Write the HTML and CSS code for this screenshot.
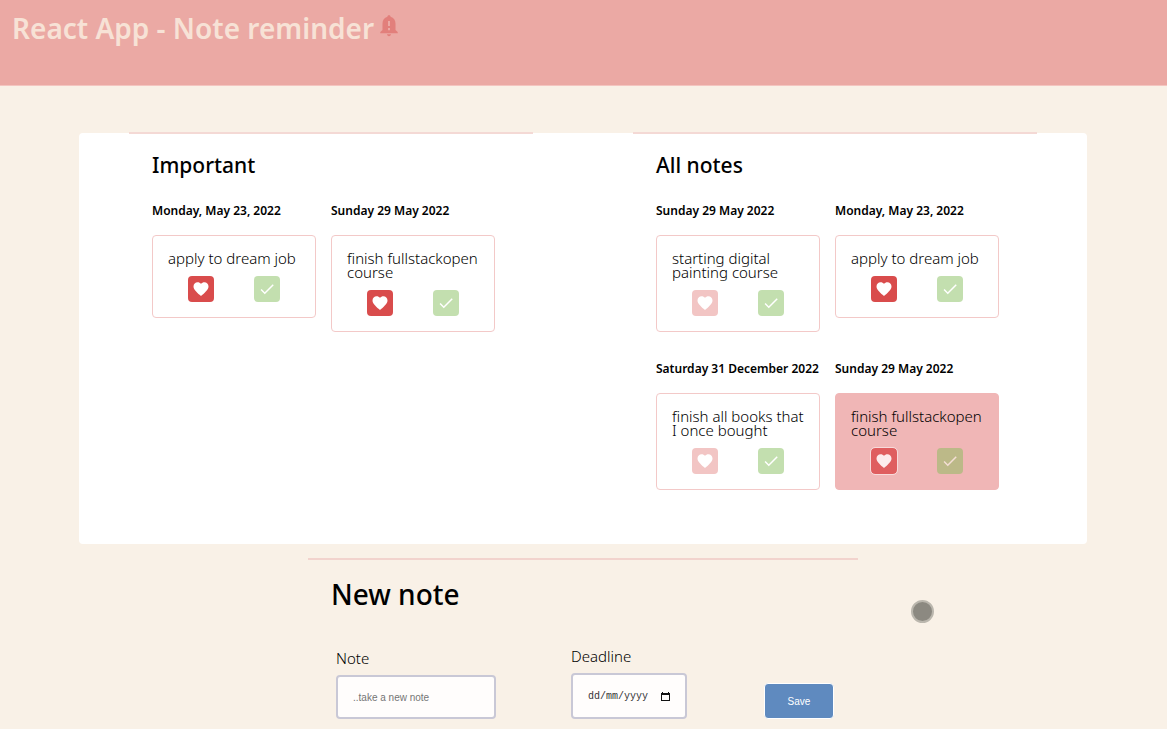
FILE: index.html
```html
<!DOCTYPE html>
<html lang="en">
<head>
<meta charset="utf-8">
<title>Note reminder</title>
<link rel="stylesheet" href="styles.css">
</head>
<body>
<svg class="sprite" aria-hidden="true">
  <symbol id="heart" viewBox="0 0 24 24"><path fill="currentColor" d="M12 21.35l-1.45-1.32C5.4 15.36 2 12.28 2 8.5 2 5.42 4.42 3 7.5 3c1.74 0 3.41.81 4.5 2.09C13.09 3.81 14.76 3 16.5 3 19.58 3 22 5.42 22 8.5c0 3.78-3.4 6.86-8.55 11.54L12 21.35z"/></symbol>
  <symbol id="check" viewBox="0 0 24 24"><path fill="currentColor" d="M9 16.17L4.83 12l-1.42 1.41L9 19 21 7l-1.41-1.41z"/></symbol>
</svg>
<header class="header">
  <h1 class="brand">React App - Note reminder</h1>
  <svg class="bell" viewBox="0 0 18 22" aria-hidden="true"><path fill="currentColor" fill-rule="evenodd" d="M9 0.2c-1 0-1.6.7-1.6 1.6C4.200 2.600 2.500 5.200 2.500 8.500V15L0.300 17v1.200h17.400V17L15.500 15V8.500c0-3.300-1.700-5.900-4.900-6.700C10.600.9 10 .2 9 .2zM8 6h2v5H8zM8 13h2v2.200H8zM7 19.300h4c0 1.100-.9 1.900-2 1.900s-2-.8-2-1.900z"/></svg>
</header>
<main class="main">
  <div class="panel">
    <section class="column">
      <h2 class="heading">Important</h2>
      <div class="notes">
        <article>
          <h3 class="date">Monday, May 23, 2022</h3>
          <div class="card"><p class="text">apply to dream job</p>
            <div class="actions"><button class="icon-button love" aria-label="Important"><svg><use href="#heart"/></svg></button><button class="icon-button done" aria-label="Done"><svg><use href="#check"/></svg></button></div></div>
        </article>
        <article>
          <h3 class="date">Sunday 29 May 2022</h3>
          <div class="card"><p class="text">finish fullstackopen course</p>
            <div class="actions"><button class="icon-button love" aria-label="Important"><svg><use href="#heart"/></svg></button><button class="icon-button done" aria-label="Done"><svg><use href="#check"/></svg></button></div></div>
        </article>
      </div>
    </section>
    <section class="column">
      <h2 class="heading">All notes</h2>
      <div class="notes">
        <article>
          <h3 class="date">Sunday 29 May 2022</h3>
          <div class="card"><p class="text">starting digital painting course</p>
            <div class="actions"><button class="icon-button love pale" aria-label="Important"><svg><use href="#heart"/></svg></button><button class="icon-button done" aria-label="Done"><svg><use href="#check"/></svg></button></div></div>
        </article>
        <article>
          <h3 class="date">Monday, May 23, 2022</h3>
          <div class="card"><p class="text">apply to dream job</p>
            <div class="actions"><button class="icon-button love" aria-label="Important"><svg><use href="#heart"/></svg></button><button class="icon-button done" aria-label="Done"><svg><use href="#check"/></svg></button></div></div>
        </article>
        <article>
          <h3 class="date">Saturday 31 December 2022</h3>
          <div class="card"><p class="text">finish all books that I once bought</p>
            <div class="actions"><button class="icon-button love pale" aria-label="Important"><svg><use href="#heart"/></svg></button><button class="icon-button done" aria-label="Done"><svg><use href="#check"/></svg></button></div></div>
        </article>
        <article>
          <h3 class="date">Sunday 29 May 2022</h3>
          <div class="card active"><p class="text">finish fullstackopen course</p>
            <div class="actions"><button class="icon-button love" aria-label="Important"><svg><use href="#heart"/></svg></button><button class="icon-button done" aria-label="Done"><svg><use href="#check"/></svg></button></div></div>
        </article>
      </div>
    </section>
  </div>
  <section class="composer">
    <h2 class="composer-title">New note</h2>
    <form class="form">
      <div class="field note-field">
        <label for="note">Note</label>
        <input class="input" id="note" type="text" placeholder="..take a new note">
      </div>
      <div class="field date-field">
        <label for="deadline">Deadline</label>
        <div class="input date-box">
          <input class="date-input" id="deadline" type="text" placeholder="dd/mm/yyyy">
          <button class="calendar" type="button" aria-label="Open calendar"><svg viewBox="0 0 9 9"><path d="M1 0h1v1h5V0h1v1h1v8H0V1h1zM1 3v5h7V3z" fill="#111" fill-rule="evenodd"/></svg></button>
        </div>
      </div>
      <button class="save" type="button">Save</button>
    </form>
  </section>
</main>
<div class="pointer"></div>
</body>
</html>
```
FILE: styles.css
```css
* { box-sizing: border-box; }
body {
  margin: 0;
  background: #f9f1e7;
  color: #000;
  font-family: "Noto Sans", "Open Sans", sans-serif;
  font-size: 15px;
  line-height: 14px;
  overflow-x: hidden;
}
h1, h2, h3, p { margin: 0; }
button { padding: 0; cursor: pointer; }
.sprite { display: none; }
.header {
  display: flex;
  align-items: flex-start;
  gap: 6px;
  min-height: 86px;
  padding: 12px;
  background: #eba9a4;
  border-bottom: 1px solid #f4c5c0;
}
.brand {
  color: #f7e2d6;
  font-size: 28px;
  line-height: 32px;
  font-weight: 600;
}
.bell { width: 18px; height: 22px; margin-top: 3px; color: #e27f7b; }
.main { padding: 47px 80px 0 79px; }
.panel {
  display: flex;
  gap: 100px;
  min-height: 411px;
  padding: 0 50px;
  background: #fff;
  border-radius: 4px;
}
.column {
  flex: 1;
  margin-top: -1px;
  padding: 19px 22px 0 23px;
  border-top: 2px solid #f4d9d5;
}
.heading { font-size: 21px; line-height: 24px; font-weight: 500; }
.notes {
  display: grid;
  grid-template-columns: repeat(auto-fill, 164px);
  gap: 30px 15px;
  align-items: start;
  margin-top: 27px;
}
.date { font-size: 12px; line-height: 14px; font-weight: 600; white-space: nowrap; }
.card {
  margin-top: 17px;
  padding: 15px;
  border: 1px solid #f3c9c8;
  border-radius: 4px;
}
.card.active { background: #f0b6b6; border-color: #f0b6b6; }
.text { font-size: 15px; line-height: 14px; font-weight: 300; }
.actions { display: flex; justify-content: space-around; margin-top: 11px; }
.icon-button {
  display: flex;
  align-items: center;
  justify-content: center;
  width: 26px;
  height: 26px;
  border: 0;
  border-radius: 4px;
  color: #fff;
}
.icon-button svg { width: 18px; height: 18px; }
.love { background: #d94c4c; }
.love.pale { background: #f2c5c4; }
.done { background: #c3dfaf; }
.active .love { background: #df5e5f; color: #fcecec; outline: 1px solid #f8dada; }
.active .done { background: #bcb988; color: #f5dfd5; }
.composer {
  width: 550px;
  max-width: 100%;
  margin: 14px auto 0;
  padding: 18px 23px 0;
  border-top: 2px solid #f2d3cd;
}
.composer-title { font-size: 28px; line-height: 32px; font-weight: 500; }
.form { display: flex; align-items: flex-end; margin-top: 38px; padding-left: 5px; }
.field { display: flex; flex-direction: column; font-weight: 300; }
.field label { line-height: 16px; }
.note-field { flex: none; width: 160px; margin-right: 75px; gap: 9px; }
.date-field { flex: none; width: 116px; margin-right: 77px; gap: 9px; }
.input {
  width: 100%;
  height: 44px;
  padding: 0 15px;
  background: #fffdfc;
  border: 2px solid #c9c8d6;
  border-radius: 4px;
  color: #555;
  font-family: "Liberation Sans", Arial, sans-serif;
  font-size: 10px;
}
.input::placeholder { color: #757575; }
.date-box { display: flex; align-items: center; justify-content: space-between; height: 46px; }
.date-input {
  width: 64px;
  padding: 0;
  border: 0;
  background: none;
  font-family: "Liberation Mono", monospace;
  font-size: 10px;
}
.date-input::placeholder { color: #333; }
.calendar { display: flex; width: 9px; border: 0; background: none; }
.calendar svg { width: 9px; height: 9px; }
.save {
  flex: none;
  width: 70px;
  height: 36px;
  background: #5f8abf;
  border: 1px solid #fff;
  border-radius: 4px;
  color: #fff;
  font-family: "Liberation Sans", Arial, sans-serif;
  font-size: 10px;
}
.pointer {
  position: absolute;
  left: 911px;
  top: 600px;
  width: 23px;
  height: 23px;
  background: #8c8981;
  border: 2px solid #bbb7ae;
  border-radius: 50%;
}
```
